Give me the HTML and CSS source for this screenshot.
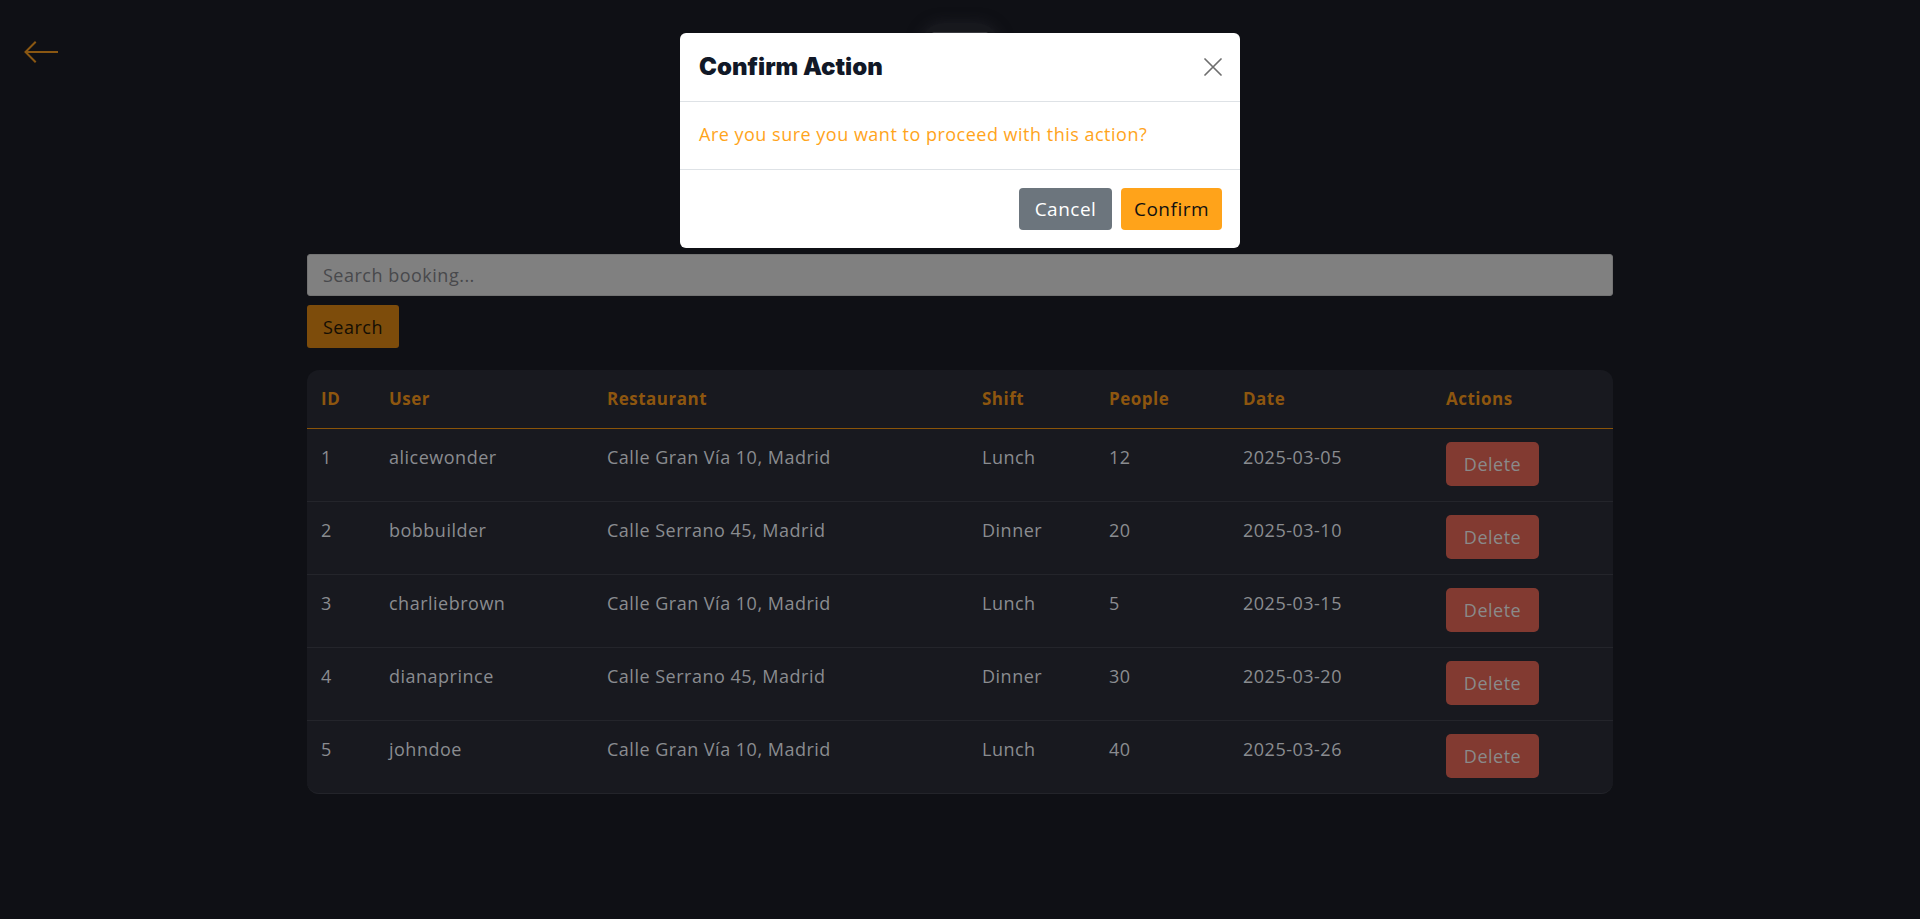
FILE: index.html
```html
<!DOCTYPE html>
<html lang="en">
<head>
<meta charset="utf-8">
<title>Bookings</title>
<link rel="stylesheet" href="styles.css">
</head>
<body>
<a class="back" href="#" aria-label="Back">
  <svg width="34" height="22" viewBox="0 0 34 22" fill="none" stroke="#8a5712" stroke-width="2" stroke-linecap="square">
    <path d="M2 11 H33"/>
    <path d="M11 1.5 L1.5 11 L11 20.5"/>
  </svg>
</a>

<main class="page">
  <div class="hero">
    <div class="logo"><div class="logo-bar"></div></div>
  </div>

  <form class="search">
    <input class="search-input" type="text" placeholder="Search booking...">
    <button class="search-btn" type="button">Search</button>
  </form>

  <div class="table-wrap">
    <table class="bookings">
      <colgroup>
        <col class="c-id"><col class="c-user"><col class="c-rest"><col class="c-shift"><col class="c-people"><col class="c-date"><col class="c-act">
      </colgroup>
      <thead>
        <tr><th>ID</th><th>User</th><th>Restaurant</th><th>Shift</th><th>People</th><th>Date</th><th>Actions</th></tr>
      </thead>
      <tbody>
        <tr><td>1</td><td>alicewonder</td><td>Calle Gran Vía 10, Madrid</td><td>Lunch</td><td>12</td><td>2025-03-05</td><td class="act"><button class="del" type="button">Delete</button></td></tr>
        <tr><td>2</td><td>bobbuilder</td><td>Calle Serrano 45, Madrid</td><td>Dinner</td><td>20</td><td>2025-03-10</td><td class="act"><button class="del" type="button">Delete</button></td></tr>
        <tr><td>3</td><td>charliebrown</td><td>Calle Gran Vía 10, Madrid</td><td>Lunch</td><td>5</td><td>2025-03-15</td><td class="act"><button class="del" type="button">Delete</button></td></tr>
        <tr><td>4</td><td>dianaprince</td><td>Calle Serrano 45, Madrid</td><td>Dinner</td><td>30</td><td>2025-03-20</td><td class="act"><button class="del" type="button">Delete</button></td></tr>
        <tr><td>5</td><td>johndoe</td><td>Calle Gran Vía 10, Madrid</td><td>Lunch</td><td>40</td><td>2025-03-26</td><td class="act"><button class="del" type="button">Delete</button></td></tr>
      </tbody>
    </table>
  </div>
</main>

<div class="modal" role="dialog" aria-modal="true">
  <div class="modal-header">
    <h5 class="modal-title">Confirm Action</h5>
    <button class="modal-close" type="button" aria-label="Close">
      <svg width="18" height="18" viewBox="0 0 18 18" stroke="#6e6e6e" stroke-width="1.7" stroke-linecap="round">
        <path d="M1 1 L17 17 M17 1 L1 17"/>
      </svg>
    </button>
  </div>
  <div class="modal-body">Are you sure you want to proceed with this action?</div>
  <div class="modal-footer">
    <button class="btn btn-cancel" type="button">Cancel</button>
    <button class="btn btn-confirm" type="button">Confirm</button>
  </div>
</div>
</body>
</html>
```
FILE: styles.css
```css
* { box-sizing: border-box; }

body {
  margin: 0;
  min-height: 919px;
  background: #0f1015;
  font-family: "Open Sans", "Noto Sans", sans-serif;
  font-size: 18px;
  letter-spacing: 0.5px;
}

.back {
  position: absolute;
  left: 24px;
  top: 41px;
  width: 34px;
  height: 22px;
  display: block;
}
.back svg { display: block; }

.page {
  width: 1306px;
  margin: 0 auto;
  padding-top: 23px;
}

.hero { height: 231px; }

.logo {
  width: 80px;
  height: 80px;
  margin: 0 auto;
  padding-top: 9px;
  border-radius: 24px;
  background: #17181d;
  box-shadow: 0 0 14px rgba(38, 39, 46, 0.6);
}
.logo-bar {
  width: 56px;
  height: 4px;
  margin: 0 auto;
  border-radius: 2px;
  background: #3a3b3f;
}

.search { margin: 0; }

.search-input {
  display: block;
  width: 100%;
  height: 42px;
  padding: 0 15px;
  background: #808080;
  border: 1px solid #737373;
  border-radius: 3px;
  font-family: inherit;
  font-size: 18px;
  letter-spacing: 0.5px;
  color: #333;
  outline: none;
}
.search-input::placeholder { color: #48494c; }

.search-btn {
  display: block;
  margin-top: 9px;
  width: 92px;
  height: 43px;
  padding: 0;
  background: #7d4c0b;
  color: #140e04;
  border: 0;
  border-radius: 3px;
  font-family: inherit;
  font-size: 18px;
  letter-spacing: 0.5px;
}

.table-wrap {
  margin-top: 22px;
  background: #18191f;
  border-radius: 12px;
  border-bottom: 1px solid #23242a;
  overflow: hidden;
}

.bookings {
  width: 100%;
  border-collapse: collapse;
  table-layout: fixed;
}
.c-id { width: 68px; }
.c-user { width: 218px; }
.c-rest { width: 375px; }
.c-shift { width: 127px; }
.c-people { width: 134px; }
.c-date { width: 203px; }
.c-act { width: 181px; }

.bookings th {
  text-align: left;
  padding: 17px 14px;
  line-height: 24px;
  font-weight: 700;
  font-size: 17px;
  color: #8d560f;
  border-bottom: 1px solid #8a5409;
}

.bookings td {
  padding: 16px 14px;
  line-height: 24px;
  vertical-align: top;
  color: #8a8c90;
  border-bottom: 1px solid #24252b;
}
.bookings tbody tr:last-child td { border-bottom: 0; }
.bookings td.act { padding: 13px 14px 15px; }

.del {
  display: block;
  width: 93px;
  height: 44px;
  padding: 0;
  background: #823a31;
  color: #8a8a8a;
  border: 0;
  border-radius: 5px;
  font-family: inherit;
  font-size: 18px;
  letter-spacing: 0.5px;
}

.modal {
  position: fixed;
  top: 33px;
  left: 50%;
  margin-left: -280px;
  width: 560px;
  background: #fff;
  border-radius: 6px;
}

.modal-header {
  display: flex;
  align-items: center;
  justify-content: space-between;
  padding: 18px 18px 18px 19px;
  border-bottom: 1px solid #dee2e6;
}
.modal-title {
  margin: 0;
  font-family: Inter, "Liberation Sans", sans-serif;
  font-weight: 900;
  font-size: 24px;
  letter-spacing: 0;
  line-height: 32px;
  color: #111827;
}
.modal-close {
  width: 18px;
  height: 18px;
  padding: 0;
  border: 0;
  background: none;
}
.modal-close svg { display: block; }

.modal-body {
  padding: 19px 19px 21px;
  line-height: 27px;
  color: #ffa41b;
  border-bottom: 1px solid #dee2e6;
}

.modal-footer {
  display: flex;
  justify-content: flex-end;
  gap: 9px;
  padding: 18px;
}
.btn {
  height: 42px;
  padding: 0;
  border: 0;
  border-radius: 4px;
  font-family: inherit;
  font-size: 19px;
  letter-spacing: 0.5px;
}
.btn-cancel { width: 93px; background: #6c757d; color: #fff; }
.btn-confirm { width: 101px; background: #ffa31a; color: #111; }
```
